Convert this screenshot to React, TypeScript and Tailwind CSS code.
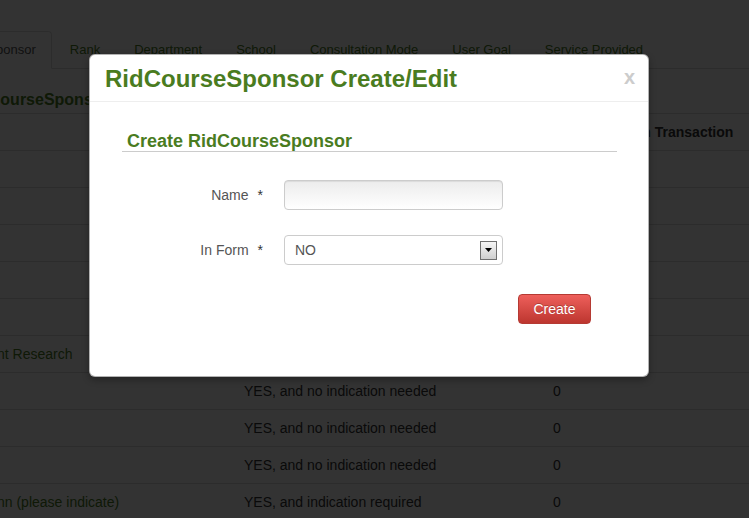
const tabs = ['Rank', 'Department', 'School', 'Consultation Mode', 'User Goal', 'Service Provided'];

type Row = { name: string; inForm: string; count: string };

const rows: Row[] = [
  { name: '', inForm: 'NO', count: '0' },
  { name: '', inForm: 'NO', count: '0' },
  { name: '', inForm: 'YES, and no indication needed', count: '0' },
  { name: '', inForm: 'YES, and no indication needed', count: '0' },
  { name: '', inForm: 'YES, and no indication needed', count: '0' },
  { name: 'nt Research', inForm: 'YES, and no indication needed', count: '0' },
  { name: '', inForm: 'YES, and no indication needed', count: '0' },
  { name: '', inForm: 'YES, and no indication needed', count: '0' },
  { name: '', inForm: 'YES, and no indication needed', count: '0' },
  { name: 'nn (please indicate)', inForm: 'YES, and indication required', count: '0' },
];

function SelectArrow() {
  return (
    <span className="flex h-[19px] w-[17px] items-center justify-center border border-[#707070] bg-linear-to-b from-[#f6f6f6] to-[#cfcfcf]">
      <svg width="7" height="4" viewBox="0 0 7 4">
        <path d="M0 0h7L3.5 4z" fill="#000" />
      </svg>
    </span>
  );
}

export default function App() {
  return (
    <div className="relative h-[518px] w-[749px] overflow-hidden bg-white font-['Liberation_Sans',Arial,sans-serif] text-[14px] leading-[20px] text-[#333]">
      {/* Page behind the modal */}
      <div className="-ml-[90px]">
        <ul className="mt-[31px] flex border-b border-[#ddd] text-[13px]">
          <li className="-mb-px mr-[2px]">
            <span className="block rounded-t-[4px] border border-[#ddd] border-b-transparent bg-white px-[15px] py-[8px] text-[#555]">
              RidCourseSponsor
            </span>
          </li>
          {tabs.map((tab) => (
            <li key={tab} className="-mb-px mr-[2px]">
              <span className="block rounded-t-[4px] border border-transparent px-[15px] py-[8px] text-[#4a7c1f]">
                {tab}
              </span>
            </li>
          ))}
        </ul>
        <h3 className="ml-[53px] mt-[21px] mb-[3px] text-[16px] font-bold text-[#4a7c1f]">RidCourseSponsor</h3>
      </div>

      <div className="-ml-[11px]">
        <div className="grid grid-cols-[247px_309px_1fr] border-t border-[#ddd] font-bold">
          <div className="px-2 py-2">&nbsp;</div>
          <div className="px-2 py-2">In Form</div>
          <div className="py-2 pl-[11px] whitespace-nowrap">Count Used In Transaction</div>
        </div>
        {rows.map((row, i) => (
          <div key={i} className="grid grid-cols-[247px_309px_1fr] border-t border-[#ddd]">
            <div className="px-2 py-2 text-[#4a7c1f]">{row.name || '\u00a0'}</div>
            <div className="px-2 py-2">{row.inForm}</div>
            <div className="px-2 py-2">{row.count}</div>
          </div>
        ))}
      </div>

      {/* Backdrop */}
      <div className="absolute inset-0 bg-black/80" />

      {/* Modal */}
      <div className="absolute left-[89px] top-[54px] w-[560px] rounded-[6px] border border-black/30 bg-white shadow-[0_3px_7px_rgba(0,0,0,0.3)]">
        <div className="flex items-start justify-between border-b border-[#eee] pl-[15px] pr-[13px] pt-[9px] pb-[7px]">
          <h3 className="text-[24px] font-bold leading-[30px] text-[#4a7c1f]">RidCourseSponsor Create/Edit</h3>
          <button className="mt-[3px] text-[20px] font-bold leading-[20px] text-[#ccc]">x</button>
        </div>

        <div className="pl-[32px] pr-[31px] pt-[29px] pb-[52px]">
          <div className="border-b border-[#ccc] pl-[5px] text-[18px] font-bold leading-[20px] text-[#4a7c1f]">
            Create RidCourseSponsor
          </div>

          <div className="mt-[28px] flex items-center gap-[21px]">
            <label className="w-[141px] text-right text-[#555]">
              Name<span className="ml-[9px] text-[#333]">*</span>
            </label>
            <input
              type="text"
              className="h-[30px] w-[219px] rounded-[4px] border border-[#ccc] bg-linear-to-b from-[#ececec] to-white px-[10px] shadow-[inset_0_1px_1px_rgba(0,0,0,0.075)] outline-none"
            />
          </div>

          <div className="mt-[25px] flex items-center gap-[21px]">
            <label className="w-[141px] text-right text-[#555]">
              In Form<span className="ml-[9px] text-[#333]">*</span>
            </label>
            <div className="flex h-[30px] w-[219px] items-center justify-between rounded-[4px] border border-[#ccc] bg-white pl-[10px] pr-[5px] text-[#555]">
              <span>NO</span>
              <SelectArrow />
            </div>
          </div>

          <div className="mt-[29px] flex justify-end pr-[26px]">
            <button className="h-[30px] w-[73px] rounded-[4px] border border-[#b53a33] bg-linear-to-b from-[#ee5f5b] to-[#bd362f] text-[14px] text-white [text-shadow:0_-1px_0_rgba(0,0,0,0.25)]">
              Create
            </button>
          </div>
        </div>
      </div>
    </div>
  );
}
